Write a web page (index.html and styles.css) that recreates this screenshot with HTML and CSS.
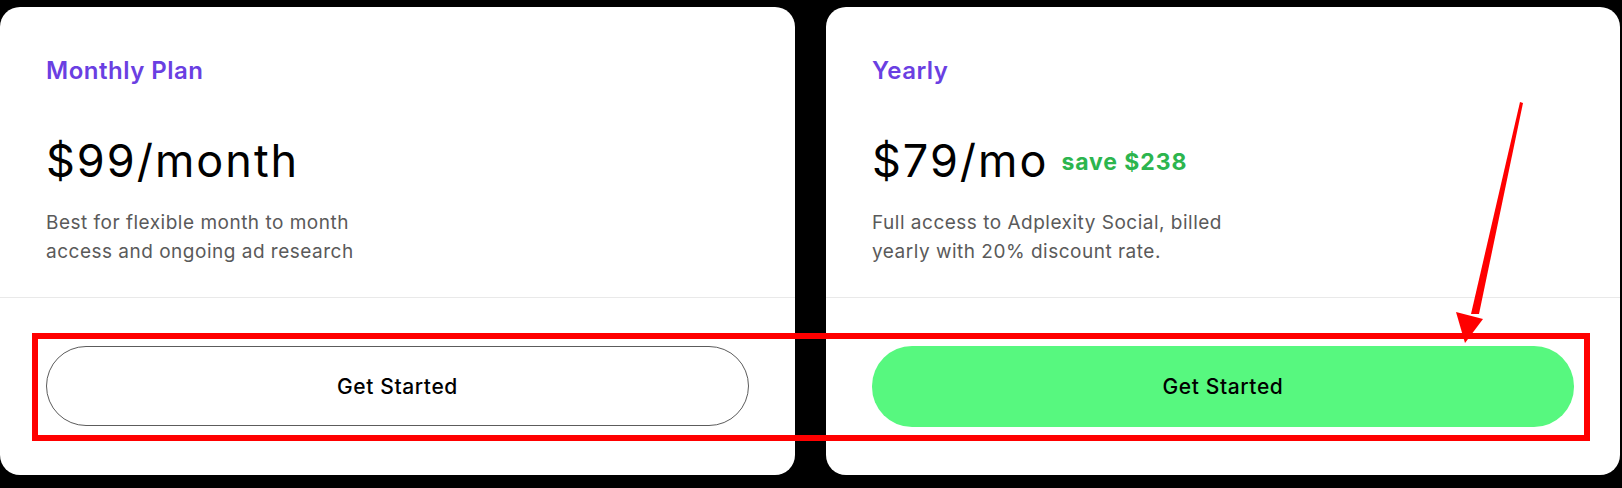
FILE: index.html
```html
<!DOCTYPE html>
<html lang="en">
<head>
    <meta charset="UTF-8">
    <meta name="viewport" content="width=device-width, initial-scale=1.0">
    <title>Pricing</title>
    <link rel="stylesheet" href="styles.css">
</head>
<body>
    <div class="plans">
        <div class="plan-card">
            <div class="plan-top">
                <h2 class="plan-name">Monthly Plan</h2>
                <div class="plan-price">
                    <span class="price">$99/month</span>
                </div>
                <p class="plan-desc">Best for flexible month to month<br>access and ongoing ad research</p>
            </div>
            <div class="plan-bottom">
                <button class="btn btn-outline">Get Started</button>
            </div>
        </div>

        <div class="plan-card">
            <div class="plan-top">
                <h2 class="plan-name">Yearly</h2>
                <div class="plan-price">
                    <span class="price">$79/mo</span>
                    <span class="save">save $238</span>
                </div>
                <p class="plan-desc">Full access to Adplexity Social, billed<br>yearly with 20% discount rate.</p>
            </div>
            <div class="plan-bottom">
                <button class="btn btn-green">Get Started</button>
            </div>
        </div>
    </div>

    <!-- annotation drawn over the screenshot -->
    <svg class="markup" width="1622" height="488" viewBox="0 0 1622 488">
        <rect x="35" y="336" width="1552" height="102" fill="none" stroke="#ff0000" stroke-width="6"/>
        <polygon points="1520,102 1523,103 1479,314 1471,314" fill="#ff0000"/>
        <polygon points="1456,312 1483,319 1465,343" fill="#ff0000"/>
    </svg>
</body>
</html>
```

FILE: styles.css
```css
body {
    margin: 0;
    background: #000;
    font-family: 'Inter', 'Liberation Sans', Arial, sans-serif;
    width: 1622px;
    height: 488px;
    overflow: hidden;
    position: relative;
}

.plans {
    display: grid;
    grid-template-columns: 795px 794px;
    gap: 31px;
    padding: 7px 2px 0 0;
}

.plan-card {
    background: #fff;
    border-radius: 20px;
    height: 468px;
    display: flex;
    flex-direction: column;
}

.plan-top {
    box-sizing: border-box;
    height: 291px;
    padding: 48.5px 46px 0;
    border-bottom: 1px solid #e9e9e9;
}

.plan-name {
    margin: 0;
    font-size: 24px;
    line-height: 30px;
    font-weight: 600;
    letter-spacing: 0.5px;
    color: #6a3fe2;
}

.plan-price {
    display: flex;
    align-items: baseline;
    gap: 13px;
    margin-top: 47px;
}

.price {
    font-size: 45px;
    line-height: 56px;
    font-weight: 400;
    letter-spacing: 2px;
    color: #000;
}

.save {
    font-size: 23px;
    font-weight: 700;
    letter-spacing: 0.9px;
    color: #2cb54e;
    position: relative;
    top: -7px;
}

.plan-desc {
    margin: 19px 0 0;
    font-size: 19px;
    line-height: 29px;
    letter-spacing: 0.5px;
    color: #5a5a5a;
}

.plan-bottom {
    padding: 48px 46px 0;
}

.btn {
    display: block;
    width: 100%;
    height: 80px;
    border-radius: 40px;
    font-family: inherit;
    font-size: 21px;
    font-weight: 500;
    letter-spacing: 0.6px;
    color: #000;
    cursor: pointer;
}

.btn-outline {
    background: #fff;
    border: 1px solid #5c5c5c;
}

.btn-green {
    background: #57f87f;
    border: none;
    height: 81px;
}

.markup {
    position: absolute;
    left: 0;
    top: 0;
    pointer-events: none;
}
```
